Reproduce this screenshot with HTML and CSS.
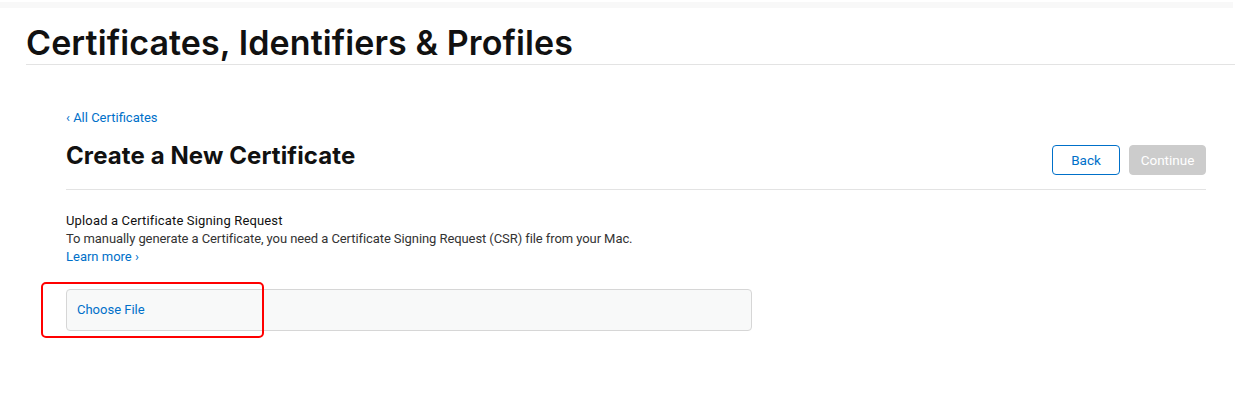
FILE: index.html
```html
<!DOCTYPE html>
<html lang="en">
<head>
  <meta charset="UTF-8">
  <meta name="viewport" content="width=device-width, initial-scale=1.0">
  <title>Certificates, Identifiers &amp; Profiles</title>
  <link rel="stylesheet" href="styles.css">
</head>
<body>
  <div class="topbar"></div>

  <header class="page-header">
    <h1>Certificates, Identifiers &amp; Profiles</h1>
  </header>

  <main class="content">
    <a class="back-link" href="#">&lsaquo; All Certificates</a>

    <div class="title-row">
      <h2>Create a New Certificate</h2>
      <div class="actions">
        <button class="btn btn-outline">Back</button>
        <button class="btn btn-disabled" disabled>Continue</button>
      </div>
    </div>

    <section class="upload">
      <h3>Upload a Certificate Signing Request</h3>
      <p>To manually generate a Certificate, you need a Certificate Signing Request (CSR) file from your Mac.</p>
      <a class="learn-more" href="#">Learn more &rsaquo;</a>

      <div class="file-wrap">
        <div class="file-box">
          <span class="choose">Choose File</span>
        </div>
        <div class="highlight"></div>
      </div>
    </section>
  </main>
</body>
</html>
```

FILE: styles.css
```css
* {
  margin: 0;
  padding: 0;
  box-sizing: border-box;
}

body {
  font-family: Roboto, "Noto Sans", sans-serif;
  background-color: #fff;
  color: #1d1d1f;
  width: 1235px;
  height: 399px;
  overflow: hidden;
}

.topbar {
  height: 6px;
  margin: 2px 2px 0 0;
  background-color: #f8f8f8;
}

.page-header {
  margin-left: 26px;
  padding-top: 15px;
  border-bottom: 1px solid #e3e3e3;
  height: 57px;
}

.page-header h1 {
  font-family: Inter, "Noto Sans", sans-serif;
  font-size: 34px;
  font-weight: 600;
  line-height: 40px;
  letter-spacing: 0.1px;
  color: #111;
}

.content {
  padding: 45px 29px 0 66px;
}

.back-link {
  display: block;
  font-size: 13px;
  line-height: 16px;
  color: #0070c9;
  text-decoration: none;
}

.title-row {
  display: flex;
  justify-content: space-between;
  align-items: flex-start;
  margin-top: 19px;
  padding-bottom: 14px;
  border-bottom: 1px solid #e3e3e3;
}

.title-row h2 {
  font-family: Inter, "Noto Sans", sans-serif;
  font-size: 24px;
  line-height: 21px;
  font-weight: 700;
  letter-spacing: 0.1px;
  color: #111;
}

.actions {
  display: flex;
  gap: 9px;
}

.btn {
  font-family: Roboto, "Noto Sans", sans-serif;
  font-size: 13.5px;
  height: 30px;
  border-radius: 4px;
  padding: 0 10px;
}

.btn-outline {
  width: 68px;
  background: #fff;
  color: #0070c9;
  border: 1px solid #0070c9;
}

.btn-disabled {
  width: 77px;
  background: #cccccc;
  color: #fff;
  border: 1px solid #cccccc;
}

.upload {
  padding-top: 22px;
  font-size: 13px;
  line-height: 18px;
}

.upload h3 {
  font-size: 13px;
  font-weight: 400;
  letter-spacing: 0.15px;
  color: #111;
}

.upload p {
  color: #333;
  letter-spacing: -0.08px;
}

.learn-more {
  display: block;
  color: #0070c9;
  text-decoration: none;
}

.file-wrap {
  position: relative;
  margin-top: 23px;
  width: 686px;
}

.file-box {
  height: 42px;
  display: flex;
  align-items: center;
  padding-left: 10px;
  background: #f8f9f9;
  border: 1px solid #d6d6d6;
  border-radius: 4px;
}

.choose {
  color: #0070c9;
  font-size: 13px;
}

.highlight {
  position: absolute;
  left: -25px;
  top: -7px;
  width: 223px;
  height: 56px;
  border: 2px solid #ff0000;
  border-radius: 5px;
}
```
